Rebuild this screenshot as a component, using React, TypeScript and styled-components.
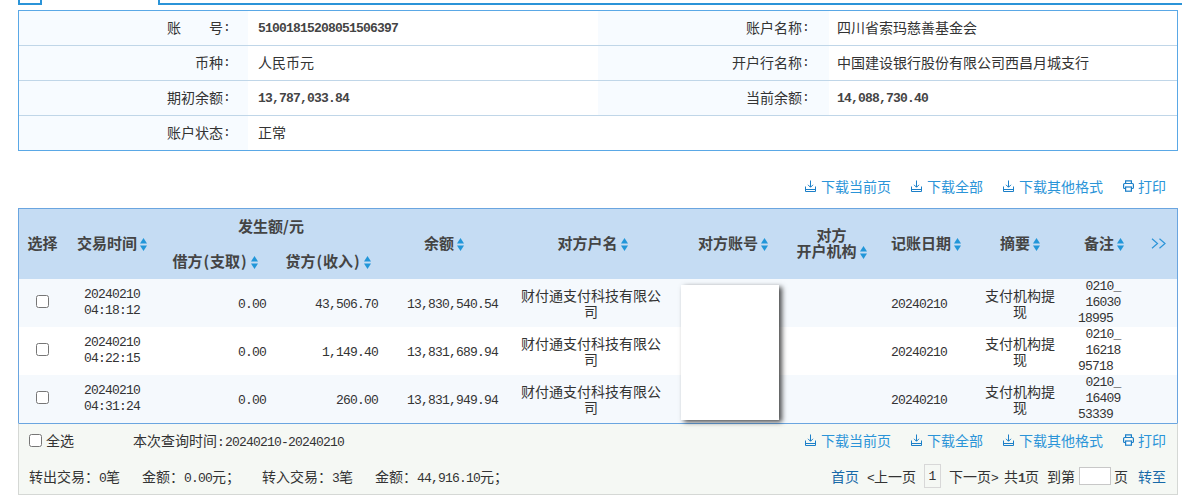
import React from 'react';
import styled, { createGlobalStyle } from 'styled-components';

const GlobalStyle = createGlobalStyle`
  html, body {
    margin: 0;
    padding: 0;
    background: #fff;
    overflow: hidden;
  }
  body {
    font-family: "Noto Sans CJK SC", "Liberation Sans", sans-serif;
    font-size: 14px;
    color: #333;
  }
`;

const Page = styled.div`
  width: 1182px;
  height: 499px;
  padding-left: 18px;
  box-sizing: border-box;
`;

const TabStrip = styled.div`
  display: flex;
  height: 10px;
`;

const TabEdge = styled.div<{ $grow?: boolean }>`
  box-sizing: border-box;
  height: 5px;
  border-bottom: 2px solid #2b94d8;
  ${(p) => (p.$grow ? 'flex: 1; border-left: 2px solid #2b94d8;' : 'width: 24px; border-right: 2px solid #2b94d8; border-left: 2px solid #2b94d8;')}
`;

const TabGap = styled.div`
  width: 116px;
`;

const Content = styled.div`
  width: 1160px;
`;

const InfoBox = styled.div`
  border: 1px solid #5aa8e6;
`;

const InfoRow = styled.div`
  display: grid;
  grid-template-columns: 229px 350px 231px 1fr;
  height: 34px;
  border-bottom: 1px solid #c0d6e8;
  &:last-child {
    border-bottom: none;
  }
`;

const InfoLabel = styled.div<{ $empty?: boolean; $second?: boolean }>`
  display: flex;
  align-items: center;
  justify-content: flex-end;
  padding-right: ${(p) => (p.$second ? '19px' : '17px')};
  padding-bottom: 2px;
  background: ${(p) => (p.$empty ? '#fff' : '#f7fbff')};
`;

const InfoValue = styled.div<{ $second?: boolean }>`
  display: flex;
  align-items: center;
  padding-left: ${(p) => (p.$second ? '8px' : '10px')};
  padding-bottom: 2px;
`;

const Num = styled.span<{ $bold?: boolean }>`
  font-family: "Liberation Mono", monospace;
  font-size: 13px;
  letter-spacing: -0.8px;
  font-weight: ${(p) => (p.$bold ? 700 : 400)};
  color: ${(p) => (p.$bold ? '#444' : 'inherit')};
`;

const InfoNum = styled(Num)`
  padding-top: 2px;
`;

const Colon = styled.span`
  display: inline-block;
  width: 8px;
  font-family: "Liberation Mono", monospace;
  font-size: 13px;
  text-align: center;
`;

const LinkBar = styled.div<{ $inFooter?: boolean }>`
  display: flex;
  justify-content: flex-end;
  gap: 20px;
  padding-right: ${(p) => (p.$inFooter ? '11px' : '12px')};
  ${(p) => (p.$inFooter ? '' : 'padding-top: 25px; padding-bottom: 12px;')}
`;

const LinkItem = styled.a<{ $print?: boolean }>`
  display: inline-flex;
  align-items: center;
  gap: ${(p) => (p.$print ? '4px' : '5px')};
  line-height: 20px;
  color: #2b94d8;
`;

const TablePanel = styled.div`
  position: relative;
  border: 1px solid #6aa5e0;
  border-bottom: none;
`;

const Redacted = styled.div`
  position: absolute;
  left: 662px;
  top: 76px;
  width: 98px;
  height: 135px;
  background: #fff;
  box-shadow: 3px 2px 5px rgba(0, 0, 0, 0.7);
`;

const Table = styled.table`
  width: 1158px;
  table-layout: fixed;
  border-collapse: collapse;
`;

const Head = styled.th<{ $shift?: number }>`
  box-sizing: border-box;
  background: #c5dcf3;
  height: 35px;
  padding: 0 0 2px ${(p) => p.$shift ?? 0}px;
  font-size: 15px;
  font-weight: 700;
  line-height: 16px;
  color: #444;
  text-align: center;
  vertical-align: middle;
`;

const Paren = styled.span`
  display: inline-block;
  width: 7.5px;
  text-align: center;
`;

const Row = styled.tr<{ $odd?: boolean }>`
  background: ${(p) => (p.$odd ? '#f5f9fd' : '#fff')};
  height: 48px;
`;

const Cell = styled.td<{ $pad?: number; $right?: boolean; $endPad?: number }>`
  padding: 0 ${(p) => (p.$right ? 6 : p.$endPad ?? p.$pad ?? 0)}px 0 ${(p) => p.$pad ?? 0}px;
  text-align: ${(p) => (p.$right ? 'right' : 'center')};
  vertical-align: middle;
  line-height: 16px;
  font-size: 14px;
  color: #333;
`;

const Stack = styled.div`
  display: flex;
  flex-direction: column;
`;

const RemarkLine = styled(Num)<{ $last?: boolean }>`
  display: block;
  padding-right: ${(p) => (p.$last ? '15px' : '0')};
`;

const Box = styled.input.attrs({ type: 'checkbox' })`
  width: 13px;
  height: 13px;
  margin: 0;
`;

const RowBox = styled(Box)`
  display: block;
  margin: -4px auto 0;
`;

const Footer = styled.div`
  box-sizing: border-box;
  height: 72px;
  background: #f5f8f4;
  border: 1px solid #d5d8d5;
  border-top: 1px solid #6aa5e0;
  padding: 6px 0 0 10px;
`;

const FooterLine = styled.div`
  display: flex;
  align-items: center;
  justify-content: space-between;
  height: 20px;
`;

const SummaryLine = styled(FooterLine)`
  margin-top: 13px;
  height: 26px;
`;

const FooterLeft = styled.div`
  display: flex;
  align-items: center;
`;

const SelectAll = styled.label`
  display: inline-flex;
  align-items: center;
  gap: 4px;
  width: 104px;
`;

const Summary = styled.span`
  margin-right: 22px;
`;

const Pager = styled.div`
  display: flex;
  align-items: center;
  padding-right: 11px;
`;

const PagerLink = styled.a<{ $left?: number }>`
  margin-left: ${(p) => p.$left ?? 0}px;
  color: #1769a8;
`;

const PagerText = styled.span<{ $left?: number }>`
  margin-left: ${(p) => p.$left ?? 0}px;
  white-space: nowrap;
`;

const PageNum = styled.span`
  box-sizing: border-box;
  width: 17px;
  height: 24px;
  margin-left: 8px;
  display: flex;
  align-items: center;
  justify-content: center;
  border: 1px solid #d8d8d8;
  font-family: "Liberation Mono", monospace;
  font-size: 13px;
`;

const PageInput = styled.input`
  box-sizing: border-box;
  width: 32px;
  height: 18px;
  margin: 0 3px 0 4px;
  padding: 0;
  background: #fff;
  border: 1px solid #c8c8c8;
  outline: none;
`;

const DownloadIcon = () => (
  <svg width="11" height="12" viewBox="0 0 11 12" fill="none" stroke="#1b7fc8" strokeWidth="1">
    <path d="M5.5 0.5V7M3 4.8L5.5 7.3L8 4.8" />
    <path d="M0.5 6.5V11.5H10.5V6.5M0.5 9.5H10.5" />
  </svg>
);

const PrintIcon = () => (
  <svg width="11" height="12" viewBox="0 0 11 12" fill="none" stroke="#1b7fc8" strokeWidth="1.2">
    <path d="M2.6 3.5V0.8H8.4V3.5" />
    <rect x="0.6" y="3.5" width="9.8" height="5" rx="1" />
    <rect x="2.6" y="7" width="5.8" height="4.2" fill="#fff" />
  </svg>
);

const SortIcon = () => (
  <svg width="7" height="13" viewBox="0 0 7 13" fill="#2196d9" style={{ marginLeft: 3, verticalAlign: -2 }}>
    <path d="M3.5 0L7 5.5H0Z" />
    <path d="M0 7.5H7L3.5 13Z" />
  </svg>
);

const MoreIcon = () => (
  <svg width="15" height="11" viewBox="0 0 15 11" fill="none" stroke="#2b94d8" strokeWidth="1.2">
    <path d="M1 0.8L6.5 5.5L1 10.2" />
    <path d="M8.5 0.8L14 5.5L8.5 10.2" />
  </svg>
);

const Links = ({ inFooter }: { inFooter?: boolean }) => (
  <LinkBar $inFooter={inFooter}>
    <LinkItem><DownloadIcon />下载当前页</LinkItem>
    <LinkItem><DownloadIcon />下载全部</LinkItem>
    <LinkItem><DownloadIcon />下载其他格式</LinkItem>
    <LinkItem $print><PrintIcon />打印</LinkItem>
  </LinkBar>
);

const rows = [
  { date: '20240210', time: '04:18:12', credit: '43,506.70', balance: '13,830,540.54', remark: ['0210_', '16030', '18995'] },
  { date: '20240210', time: '04:22:15', credit: '1,149.40', balance: '13,831,689.94', remark: ['0210_', '16218', '95718'] },
  { date: '20240210', time: '04:31:24', credit: '260.00', balance: '13,831,949.94', remark: ['0210_', '16409', '53339'] },
];

const widths = [47, 92, 114, 112, 120, 174, 110, 84, 108, 80, 80, 37];

const App: React.FC = () => {
  return (
    <Page>
      <GlobalStyle />
      <TabStrip>
        <TabEdge />
        <TabGap />
        <TabEdge $grow />
      </TabStrip>
      <Content>
        <InfoBox>
          <InfoRow>
            <InfoLabel>账{'\u2003\u2003'}号<Colon>:</Colon></InfoLabel>
            <InfoValue><InfoNum $bold>51001815208051506397</InfoNum></InfoValue>
            <InfoLabel $second>账户名称<Colon>:</Colon></InfoLabel>
            <InfoValue $second>四川省索玛慈善基金会</InfoValue>
          </InfoRow>
          <InfoRow>
            <InfoLabel>币种<Colon>:</Colon></InfoLabel>
            <InfoValue>人民币元</InfoValue>
            <InfoLabel $second>开户行名称<Colon>:</Colon></InfoLabel>
            <InfoValue $second>中国建设银行股份有限公司西昌月城支行</InfoValue>
          </InfoRow>
          <InfoRow>
            <InfoLabel>期初余额<Colon>:</Colon></InfoLabel>
            <InfoValue><InfoNum $bold>13,787,033.84</InfoNum></InfoValue>
            <InfoLabel $second>当前余额<Colon>:</Colon></InfoLabel>
            <InfoValue $second><InfoNum $bold>14,088,730.40</InfoNum></InfoValue>
          </InfoRow>
          <InfoRow>
            <InfoLabel>账户状态<Colon>:</Colon></InfoLabel>
            <InfoValue>正常</InfoValue>
            <InfoLabel $empty />
            <InfoValue />
          </InfoRow>
        </InfoBox>

        <Links />

        <TablePanel>
          <Table>
            <colgroup>
              {widths.map((w, i) => <col key={i} style={{ width: w }} />)}
            </colgroup>
            <thead>
              <tr>
                <Head rowSpan={2}>选择</Head>
                <Head rowSpan={2}>交易时间<SortIcon /></Head>
                <Head colSpan={2}>发生额/元</Head>
                <Head rowSpan={2}>余额<SortIcon /></Head>
                <Head rowSpan={2} $shift={3}>对方户名<SortIcon /></Head>
                <Head rowSpan={2}>对方账号<SortIcon /></Head>
                <Head rowSpan={2} $shift={3}>对方<br />开户机构<SortIcon /></Head>
                <Head rowSpan={2}>记账日期<SortIcon /></Head>
                <Head rowSpan={2}>摘要<SortIcon /></Head>
                <Head rowSpan={2} $shift={8}>备注<SortIcon /></Head>
                <Head rowSpan={2}><MoreIcon /></Head>
              </tr>
              <tr>
                <Head>借方<Paren>(</Paren>支取<Paren>)</Paren><SortIcon /></Head>
                <Head>贷方<Paren>(</Paren>收入<Paren>)</Paren><SortIcon /></Head>
              </tr>
            </thead>
            <tbody>
              {rows.map((r, i) => (
                <Row key={r.time} $odd={i % 2 === 0}>
                  <Cell><RowBox /></Cell>
                  <Cell>
                    <Stack>
                      <Num>{r.date}</Num>
                      <Num>{r.time}</Num>
                    </Stack>
                  </Cell>
                  <Cell $right><Num>0.00</Num></Cell>
                  <Cell $right><Num>{r.credit}</Num></Cell>
                  <Cell $right><Num>{r.balance}</Num></Cell>
                  <Cell $pad={17}>财付通支付科技有限公司</Cell>
                  <Cell />
                  <Cell />
                  <Cell $endPad={14}><Num>{r.date}</Num></Cell>
                  <Cell $pad={5}>支付机构提现</Cell>
                  <Cell $pad={6} $endPad={0}>
                    {r.remark.map((line, j) => (
                      <RemarkLine key={j} $last={j === 2}>{line}</RemarkLine>
                    ))}
                  </Cell>
                  <Cell />
                </Row>
              ))}
            </tbody>
          </Table>
          <Redacted />
        </TablePanel>

        <Footer>
          <FooterLine>
            <FooterLeft>
              <SelectAll><Box />全选</SelectAll>
              <span>本次查询时间<Colon>:</Colon><Num>20240210-20240210</Num></span>
            </FooterLeft>
            <Links inFooter />
          </FooterLine>
          <SummaryLine>
            <FooterLeft>
              <Summary>转出交易：<Num>0</Num>笔</Summary>
              <Summary>金额：<Num>0.00</Num>元；</Summary>
              <Summary>转入交易：<Num>3</Num>笔</Summary>
              <Summary>金额：<Num>44,916.10</Num>元；</Summary>
            </FooterLeft>
            <Pager>
              <PagerLink>首页</PagerLink>
              <PagerText $left={8}><Num>&lt;</Num>上一页</PagerText>
              <PageNum>1</PageNum>
              <PagerText $left={8}>下一页<Num>&gt;</Num></PagerText>
              <PagerText $left={6}>共<Num $bold>1</Num>页</PagerText>
              <PagerText $left={8}>到第</PagerText>
              <PageInput />
              <PagerText>页</PagerText>
              <PagerLink $left={10}>转至</PagerLink>
            </Pager>
          </SummaryLine>
        </Footer>
      </Content>
    </Page>
  );
};

export default App;
